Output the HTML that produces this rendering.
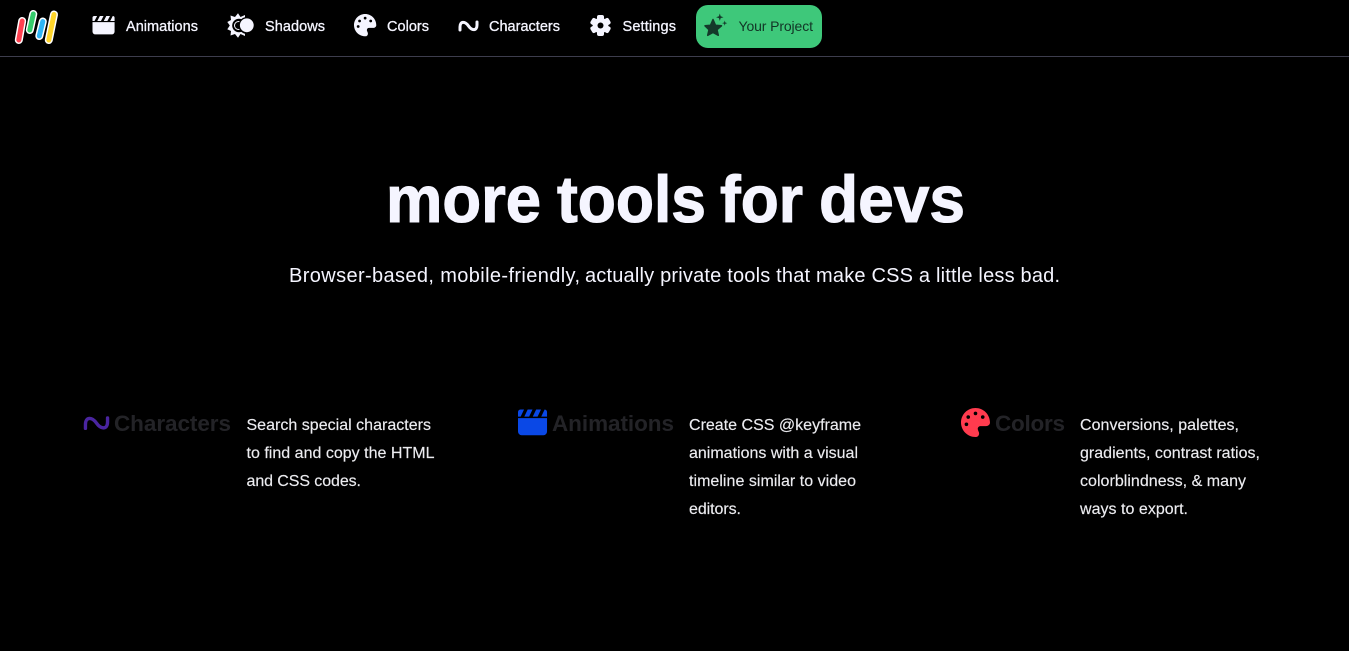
<!DOCTYPE html>
<html lang="en">
<head>
<meta charset="utf-8">
<title>more tools for devs</title>
<style>
html,body{margin:0;padding:0;background:#000;width:1349px;height:651px;overflow:hidden}
svg{display:block;position:absolute;left:0;top:0}
text{font-family:"Liberation Sans",sans-serif;white-space:pre}
.n{font-size:14.5px;fill:#f5f5ff;stroke:#f5f5ff;stroke-width:.3px}
.d{font-size:16px;fill:#ececf0;stroke:#ececf0;stroke-width:.15px}
.h{font-size:22.5px;font-weight:700;fill:#232327}
.t{font-size:66px;font-weight:700;fill:#f5f5ff;stroke:#f5f5ff;stroke-width:1.100px}
</style>
</head>
<body>
<svg width="1349" height="651" viewBox="0 0 1349 651" xmlns="http://www.w3.org/2000/svg">
<defs>
<path id="pal" fill-rule="evenodd" d="M512 256c0 .9 0 1.8 0 2.7c-.4 36.5-33.6 61.3-70.1 61.3H344c-26.5 0-48 21.5-48 48c0 3.4 .4 6.7 1 9.9c2.1 10.2 6.5 20 10.8 29.9c6.1 13.8 12.1 27.5 12.1 42c0 31.8-21.6 60.7-53.4 62c-3.5 .1-7 .2-10.6 .2C114.6 512 0 397.4 0 256S114.6 0 256 0S512 114.6 512 256zM128 288a32 32 0 1 0 -64 0 32 32 0 1 0 64 0zm0-96a32 32 0 1 0 0-64 32 32 0 1 0 0 64zM288 96a32 32 0 1 0 -64 0 32 32 0 1 0 64 0zm96 96a32 32 0 1 0 0-64 32 32 0 1 0 0 64z"/>
<path id="clap" d="M0 6.700H24V17A3 3 0 0 1 21 20H3A3 3 0 0 1 0 17ZM2 0H5L2.200 5.500H0V2A2 2 0 0 1 2 0ZM8 0H12L9.200 5.500H5.200ZM15 0H19L16.200 5.500H12.200ZM22 0A2 2 0 0 1 24 2V5.500H19.200L22 0Z"/>
<path id="til" d="M1.500 9.500V6.500C1.500 .5 6.500 .5 10 5.500S18.500 10.500 18.500 4.500V1.500" fill="none" stroke-linecap="round" stroke-linejoin="round"/>
</defs>

<!-- logo -->
<g stroke-linecap="round" fill="none">
<g stroke="#fff" stroke-width="8">
<path d="M22.200 21L18.800 40"/><path d="M33.300 14L29.800 30"/><path d="M42.800 21.500L39.300 36"/><path d="M54 14.500L48.800 40"/>
</g>
<path d="M22.200 21L18.800 40" stroke="#ff4150" stroke-width="5"/>
<path d="M33.300 14L29.800 30" stroke="#35cc6c" stroke-width="5"/>
<path d="M42.800 21.500L39.300 36" stroke="#2fb5f5" stroke-width="5"/>
<path d="M54 14.500L48.800 40" stroke="#ffd52b" stroke-width="5"/>
</g>

<!-- nav icons -->
<use href="#clap" transform="translate(92.500 16) scale(.92)" fill="#f5f5ff"/>

<g>
<polygon fill="#f5f5ff" points="238,13.200 240.500,17 245,15 245,36 240.500,34 238,37.800 235,34 230.500,35.500 231,31 227.300,29.300 229.800,25.500 227.300,22 231,20 230.500,15.500 235,17"/>
<circle cx="239" cy="25.500" r="6.800" fill="#000"/>
<circle cx="238.500" cy="25.500" r="4" fill="none" stroke="#f5f5ff" stroke-width="1"/>
<circle cx="247" cy="25.500" r="8.500" fill="#000"/>
<circle cx="246.800" cy="25.300" r="6.900" fill="#f5f5ff"/>
</g>

<use href="#pal" transform="translate(354 14) scale(.0435)" fill="#f5f5ff"/>
<use href="#til" transform="translate(458.500 20.500)" stroke="#f5f5ff" stroke-width="3"/>

<g transform="translate(600.500 25.500)" fill="#f5f5ff">
<g>
<rect x="-3.500" y="-10.500" width="7" height="21" rx="2"/>
<rect x="-3.500" y="-10.500" width="7" height="21" rx="2" transform="rotate(60)"/>
<rect x="-3.500" y="-10.500" width="7" height="21" rx="2" transform="rotate(120)"/>
</g>
<circle r="7.800"/>
<circle r="3" fill="#000"/>
</g>

<!-- project button -->
<rect x="696" y="5" width="126" height="43" rx="12" fill="#3ec87a"/>
<polygon fill="#14392a" stroke="#14392a" stroke-width="1.500" stroke-linejoin="round" points="713,19.500 715.500,25.300 721.500,25.800 717,29.700 718.300,35.300 713,32.500 707.700,35.300 709,29.700 705,25.800 710.500,25.300"/>
<path fill="#14392a" d="M719.800 13.500l.9 2.800 2.800.9-2.800.9-.9 2.800-.9-2.800-2.800-.9 2.800-.9zM724.700 20.500l.6 2 2 .6-2 .6-.6 2-.6-2-2-.6 2-.6z"/>

<!-- nav labels -->
<text class="n" x="126" y="31" textLength="72">Animations</text>
<text class="n" x="265" y="31" textLength="60">Shadows</text>
<text class="n" x="387" y="31" textLength="42">Colors</text>
<text class="n" x="489" y="31" textLength="71">Characters</text>
<text class="n" x="622.500" y="31" textLength="53.500">Settings</text>
<text x="738.500" y="31" textLength="74.500" font-size="14" fill="#123526">Your Project</text>

<rect x="0" y="56" width="1349" height="1" fill="#3d3d4d"/>

<!-- hero -->
<text class="t" x="386" y="222" textLength="155" lengthAdjust="spacingAndGlyphs">more</text>
<text class="t" x="557" y="222" textLength="149" lengthAdjust="spacingAndGlyphs">tools</text>
<text class="t" x="720" y="222" textLength="83" lengthAdjust="spacingAndGlyphs">for</text>
<text class="t" x="819" y="222" textLength="146" lengthAdjust="spacingAndGlyphs">devs</text>
<text x="289" y="282" textLength="291" font-size="20" fill="#f5f5ff">Browser-based, mobile-friendly,</text>
<text x="585" y="282" textLength="475" font-size="20" fill="#f5f5ff">actually private tools that make CSS a little less bad.</text>

<!-- features -->
<use href="#til" transform="translate(83.500 416) scale(1.300)" stroke="#4a25a0" stroke-width="2.600"/>
<text class="h" x="114" y="431" textLength="117">Characters</text>
<text class="d" x="246.500" y="430" textLength="184.500">Search special characters</text>
<text class="d" x="246.500" y="458" textLength="188">to find and copy the HTML</text>
<text class="d" x="246.500" y="486" textLength="114.500">and CSS codes.</text>

<use href="#clap" transform="translate(518 409.500) scale(1.210 1.290)" fill="#0a48e6"/>
<text class="h" x="552" y="431" textLength="122">Animations</text>
<text class="d" x="689" y="430" textLength="172">Create CSS @keyframe</text>
<text class="d" x="689" y="458" textLength="169">animations with a visual</text>
<text class="d" x="689" y="486" textLength="167">timeline similar to video</text>
<text class="d" x="689" y="514" textLength="52">editors.</text>

<use href="#pal" transform="translate(961 408) scale(.0566)" fill="#ff3b4e"/>
<text class="h" x="995" y="431" textLength="70">Colors</text>
<text class="d" x="1080" y="430" textLength="159">Conversions, palettes,</text>
<text class="d" x="1080" y="458" textLength="180">gradients, contrast ratios,</text>
<text class="d" x="1080" y="486" textLength="166">colorblindness, &amp; many</text>
<text class="d" x="1080" y="514" textLength="108">ways to export.</text>
</svg>
</body>
</html>
